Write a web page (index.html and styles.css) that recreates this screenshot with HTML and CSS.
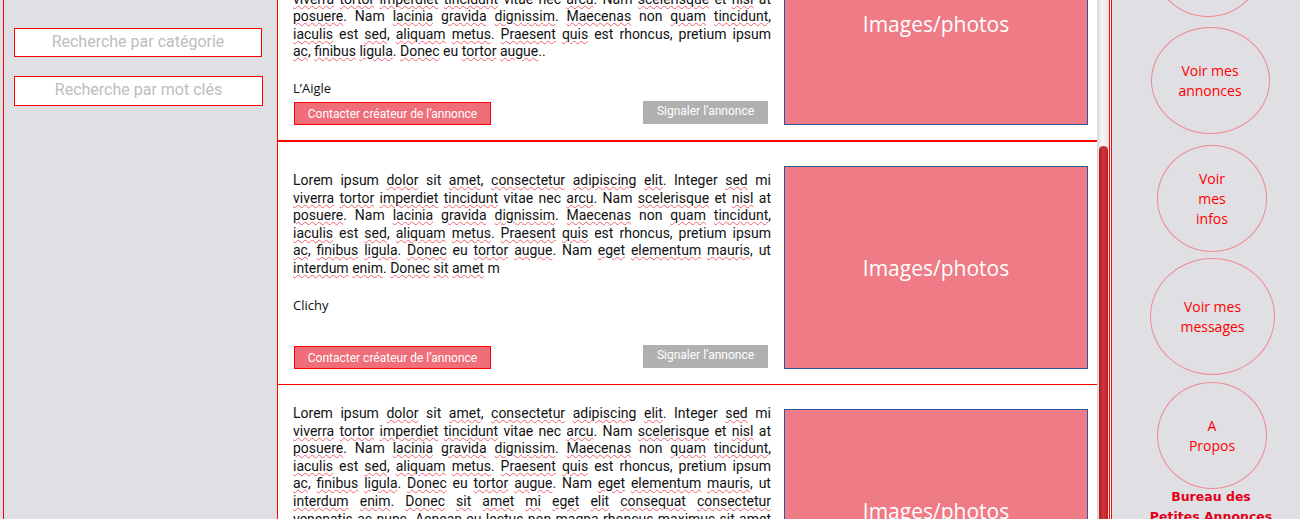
FILE: index.html
```html
<!DOCTYPE html>
<html lang="fr">
<head>
<meta charset="utf-8">
<title>Bureau des Petites Annonces</title>
<link rel="stylesheet" href="styles.css">
</head>
<body>
<aside class="side-left">
  <input class="search" type="text" placeholder="Recherche par catégorie">
  <input class="search search-kw" type="text" placeholder="Recherche par mot clés">
</aside>

<main class="main">
  <div class="list">
    <article class="card card-a">
      <div class="info">
        <p class="text">
          <span class="ln">Lorem ipsum <span class="sp">dolor</span> sit <span class="sp">amet</span>, <span class="sp">consectetur</span> <span class="sp">adipiscing</span> <span class="sp">elit</span>. Integer <span class="sp">sed</span> mi</span>
          <span class="ln"><span class="sp">viverra</span> <span class="sp">tortor</span> <span class="sp">imperdiet</span> <span class="sp">tincidunt</span> vitae nec <span class="sp">arcu</span>. Nam <span class="sp">scelerisque</span> et <span class="sp">nisl</span> at</span>
          <span class="ln"><span class="sp">posuere</span>. Nam <span class="sp">lacinia</span> <span class="sp">gravida</span> <span class="sp">dignissim</span>. <span class="sp">Maecenas</span> non <span class="sp">quam</span> <span class="sp">tincidunt</span>,</span>
          <span class="ln"><span class="sp">iaculis</span> est <span class="sp">sed</span>, <span class="sp">aliquam</span> <span class="sp">metus</span>. <span class="sp">Praesent</span> <span class="sp">quis</span> est rhoncus, pretium ipsum</span>
          <span class="ln ln-end"><span class="sp">ac</span>, <span class="sp">finibus</span> <span class="sp">ligula</span>. <span class="sp">Donec</span> eu <span class="sp">tortor</span> <span class="sp">augue</span>..</span>
        </p>
        <p class="city">L’Aigle</p>
        <div class="actions">
          <button class="btn btn-contact" type="button">Contacter créateur de l’annonce</button>
          <button class="btn btn-report" type="button">Signaler l’annonce</button>
        </div>
      </div>
      <div class="photo">Images/photos</div>
    </article>

    <article class="card card-b">
      <div class="info">
        <p class="text">
          <span class="ln">Lorem ipsum <span class="sp">dolor</span> sit <span class="sp">amet</span>, <span class="sp">consectetur</span> <span class="sp">adipiscing</span> <span class="sp">elit</span>. Integer <span class="sp">sed</span> mi</span>
          <span class="ln"><span class="sp">viverra</span> <span class="sp">tortor</span> <span class="sp">imperdiet</span> <span class="sp">tincidunt</span> vitae nec <span class="sp">arcu</span>. Nam <span class="sp">scelerisque</span> et <span class="sp">nisl</span> at</span>
          <span class="ln"><span class="sp">posuere</span>. Nam <span class="sp">lacinia</span> <span class="sp">gravida</span> <span class="sp">dignissim</span>. <span class="sp">Maecenas</span> non <span class="sp">quam</span> <span class="sp">tincidunt</span>,</span>
          <span class="ln"><span class="sp">iaculis</span> est <span class="sp">sed</span>, <span class="sp">aliquam</span> <span class="sp">metus</span>. <span class="sp">Praesent</span> <span class="sp">quis</span> est rhoncus, pretium ipsum</span>
          <span class="ln"><span class="sp">ac</span>, <span class="sp">finibus</span> <span class="sp">ligula</span>. <span class="sp">Donec</span> eu <span class="sp">tortor</span> <span class="sp">augue</span>. Nam <span class="sp">eget</span> <span class="sp">elementum</span> <span class="sp">mauris</span>, ut</span>
          <span class="ln ln-end"><span class="sp">interdum</span> <span class="sp">enim</span>. <span class="sp">Donec</span> <span class="sp">sit</span> <span class="sp">amet</span> m</span>
        </p>
        <p class="city">Clichy</p>
        <div class="actions">
          <button class="btn btn-contact" type="button">Contacter créateur de l’annonce</button>
          <button class="btn btn-report" type="button">Signaler l’annonce</button>
        </div>
      </div>
      <div class="photo">Images/photos</div>
    </article>

    <article class="card card-c">
      <div class="info">
        <p class="text">
          <span class="ln">Lorem ipsum <span class="sp">dolor</span> sit <span class="sp">amet</span>, <span class="sp">consectetur</span> <span class="sp">adipiscing</span> <span class="sp">elit</span>. Integer <span class="sp">sed</span> mi</span>
          <span class="ln"><span class="sp">viverra</span> <span class="sp">tortor</span> <span class="sp">imperdiet</span> <span class="sp">tincidunt</span> vitae nec <span class="sp">arcu</span>. Nam <span class="sp">scelerisque</span> et <span class="sp">nisl</span> at</span>
          <span class="ln"><span class="sp">posuere</span>. Nam <span class="sp">lacinia</span> <span class="sp">gravida</span> <span class="sp">dignissim</span>. <span class="sp">Maecenas</span> non <span class="sp">quam</span> <span class="sp">tincidunt</span>,</span>
          <span class="ln"><span class="sp">iaculis</span> est <span class="sp">sed</span>, <span class="sp">aliquam</span> <span class="sp">metus</span>. <span class="sp">Praesent</span> <span class="sp">quis</span> est rhoncus, pretium ipsum</span>
          <span class="ln"><span class="sp">ac</span>, <span class="sp">finibus</span> <span class="sp">ligula</span>. <span class="sp">Donec</span> eu <span class="sp">tortor</span> <span class="sp">augue</span>. Nam <span class="sp">eget</span> <span class="sp">elementum</span> <span class="sp">mauris</span>, ut</span>
          <span class="ln"><span class="sp">interdum</span> <span class="sp">enim</span>. <span class="sp">Donec</span> <span class="sp">sit</span> <span class="sp">amet</span> <span class="sp">mi</span> <span class="sp">eget</span> <span class="sp">elit</span> <span class="sp">consequat</span> <span class="sp">consectetur</span></span>
          <span class="ln"><span class="sp">venenatis</span> <span class="sp">ac</span> <span class="sp">nunc</span>. <span class="sp">Aenean</span> eu <span class="sp">lectus</span> non <span class="sp">magna</span> <span class="sp">rhoncus</span> <span class="sp">maximus</span> sit amet</span>
          <span class="ln ln-end"><span class="sp">lorem</span>. <span class="sp">Vivamus</span> <span class="sp">vel</span> <span class="sp">nibh</span> <span class="sp">faucibus</span> <span class="sp">tempor</span>.</span>
        </p>
        <p class="city">Paris</p>
        <div class="actions">
          <button class="btn btn-contact" type="button">Contacter créateur de l’annonce</button>
          <button class="btn btn-report" type="button">Signaler l’annonce</button>
        </div>
      </div>
      <div class="photo">Images/photos</div>
    </article>
  </div>
</main>

<div class="scroll"><div class="thumb"></div></div>
<div class="rule"></div>

<nav class="side-right">
  <a class="bubble bubble-first" href="#">Déposer une annonce</a>
  <a class="bubble bubble-ads" href="#">Voir mes<br>annonces</a>
  <a class="bubble bubble-infos" href="#">Voir<br>mes<br>infos</a>
  <a class="bubble bubble-msg" href="#">Voir mes<br>messages</a>
  <a class="bubble bubble-about" href="#">A<br>Propos</a>
  <p class="brand">Bureau des<br>Petites Annonces</p>
</nav>
</body>
</html>
```

FILE: styles.css
```css
* {
  box-sizing: border-box;
}

html, body {
  margin: 0;
  height: 519px;
  overflow: hidden;
}

body {
  display: flex;
  background: #e0dfe3;
  font-family: Roboto, "Liberation Sans", sans-serif;
}

/* left search panel */
.side-left {
  width: 275px;
  flex: none;
  margin-left: 3px;
  border-left: 1px solid #ff0000;
  border-right: 1px solid #ff0000;
  padding: 28px 0 0 10px;
  display: flex;
  flex-direction: column;
  align-items: flex-start;
  gap: 19px;
}

.search {
  width: 248px;
  height: 29px;
  margin: 0;
  border: 1px solid #ff0000;
  border-radius: 0;
  background: #ffffff;
  padding: 0 0 2px;
  font-family: Roboto, sans-serif;
  font-size: 16px;
  text-align: center;
  outline: none;
}

.search-kw {
  width: 249px;
  height: 30px;
  padding-bottom: 3px;
}

.search::placeholder {
  color: #bdbdbd;
}

/* main list */
.main {
  width: 819px;
  flex: none;
  background: #ffffff;
  overflow: hidden;
}

.list {
  margin-top: -102px;
}

.card {
  display: grid;
  grid-template-columns: 478px 304px;
  column-gap: 13px;
  padding: 20px 0 15px 15px;
  border-bottom: 1px solid #ff0000;
}

.card-a {
  border-bottom-width: 2px;
}

.info {
  display: flex;
  flex-direction: column;
}

.card-a .info { padding-top: 55px; }
.card-b .info { padding-top: 10px; }
.card-c .info { padding-top: 0; }

.text {
  margin: 0;
  font-size: 14px;
  line-height: 17.6px;
  color: #111111;
}

.ln {
  display: block;
  text-align: justify;
  text-align-last: justify;
}

.ln-end {
  text-align-last: left;
}

.sp {
  text-decoration-line: underline;
  text-decoration-style: wavy;
  text-decoration-color: #f4606a;
  text-decoration-thickness: 1px;
  text-underline-offset: 1px;
}

.city {
  margin: 18px 0 0;
  font-family: "Open Sans", sans-serif;
  font-size: 13px;
  color: #111111;
}

.actions {
  margin-top: auto;
  display: flex;
  justify-content: space-between;
  align-items: flex-end;
  padding: 0 3px 0 1px;
}

.btn {
  margin: 0;
  height: 23px;
  font-family: Roboto, sans-serif;
  font-size: 12px;
  color: #ffffff;
  cursor: pointer;
}

.btn-contact {
  width: 197px;
  padding: 1px 0 0;
  border: 1px solid #ff0000;
  background: #ef6e7a;
}

.btn-report {
  width: 125px;
  margin-bottom: 1px;
  padding: 0 0 3px;
  border: none;
  background: #b0b0b0;
}

.photo {
  height: 203px;
  margin-top: 4px;
  border: 1px solid #2f5597;
  background: #ee7b86;
  display: flex;
  align-items: center;
  justify-content: center;
  color: #ffffff;
  font-family: "Open Sans", sans-serif;
  font-size: 21px;
}

/* scrollbar */
.scroll {
  width: 12px;
  flex: none;
  padding-left: 2px;
  background: linear-gradient(to right, #d9d9d9, #f6f6f6 45%, #e4e4e4);
}

.thumb {
  width: 9px;
  height: 420px;
  margin-top: 146px;
  border-radius: 5px 5px 0 0;
  background: linear-gradient(to right, #b31e23, #d2353a 50%, #b21d22);
}

.rule {
  width: 3px;
  flex: none;
  border-left: 1px solid #ff0000;
  border-right: 1px solid #ff0000;
  background: #ffffff;
}

/* right navigation */
.side-right {
  flex: 1;
  display: flex;
  flex-direction: column;
  align-items: center;
  padding-left: 8px;
}

.bubble {
  display: flex;
  align-items: center;
  justify-content: center;
  flex: none;
  border: 1px solid #ee8a93;
  border-radius: 50%;
  color: #ff0000;
  text-decoration: none;
  text-align: center;
  font-family: "Open Sans", sans-serif;
  font-size: 14px;
  line-height: 20px;
}

.bubble-first {
  width: 110px;
  height: 107px;
  margin: -90px 4px 0 0;
}

.bubble-ads {
  width: 119px;
  height: 107px;
  margin-top: 10px;
}

.bubble-infos {
  width: 110px;
  height: 107px;
  margin: 11px 0 0 4px;
}

.bubble-msg {
  width: 125px;
  height: 117px;
  margin: 6px 0 0 5px;
}

.bubble-about {
  width: 110px;
  height: 107px;
  margin: 7px 0 0 4px;
}

.brand {
  margin: -2px 0 0 2px;
  text-align: center;
  font-family: "DejaVu Sans", sans-serif;
  font-weight: bold;
  font-size: 12.5px;
  line-height: 20px;
  color: #e2001b;
}
```
